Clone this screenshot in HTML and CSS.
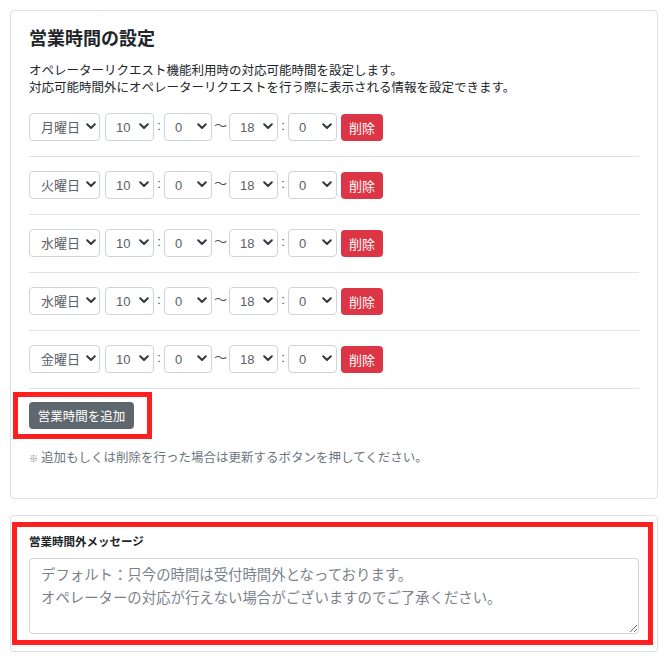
FILE: index.html
```html
<!DOCTYPE html>
<html lang="ja">
<head>
<meta charset="utf-8">
<title>営業時間の設定</title>
<link rel="stylesheet" href="styles.css">
</head>
<body>
<div class="page">
  <section class="card">
    <h2 class="title">営業時間の設定</h2>
    <p class="desc">オペレーターリクエスト機能利用時の対応可能時間を設定します。<br>対応可能時間外にオペレーターリクエストを行う際に表示される情報を設定できます。</p>

    <div class="row">
      <div class="sel sel-day"><select><option>月曜日</option></select><svg class="chev" viewBox="0 0 10 7"><path d="M1.2 1.2 5 5 8.8 1.2"/></svg></div>
      <div class="sel sel-h"><select><option>10</option></select><svg class="chev" viewBox="0 0 10 7"><path d="M1.2 1.2 5 5 8.8 1.2"/></svg></div>
      <span class="colon">:</span>
      <div class="sel sel-m"><select><option>0</option></select><svg class="chev" viewBox="0 0 10 7"><path d="M1.2 1.2 5 5 8.8 1.2"/></svg></div>
      <span class="tilde">〜</span>
      <div class="sel sel-h"><select><option>18</option></select><svg class="chev" viewBox="0 0 10 7"><path d="M1.2 1.2 5 5 8.8 1.2"/></svg></div>
      <span class="colon">:</span>
      <div class="sel sel-m2"><select><option>0</option></select><svg class="chev" viewBox="0 0 10 7"><path d="M1.2 1.2 5 5 8.8 1.2"/></svg></div>
      <button class="btn-del">削除</button>
    </div>
    <hr class="sep">
    <div class="row">
      <div class="sel sel-day"><select><option>火曜日</option></select><svg class="chev" viewBox="0 0 10 7"><path d="M1.2 1.2 5 5 8.8 1.2"/></svg></div>
      <div class="sel sel-h"><select><option>10</option></select><svg class="chev" viewBox="0 0 10 7"><path d="M1.2 1.2 5 5 8.8 1.2"/></svg></div>
      <span class="colon">:</span>
      <div class="sel sel-m"><select><option>0</option></select><svg class="chev" viewBox="0 0 10 7"><path d="M1.2 1.2 5 5 8.8 1.2"/></svg></div>
      <span class="tilde">〜</span>
      <div class="sel sel-h"><select><option>18</option></select><svg class="chev" viewBox="0 0 10 7"><path d="M1.2 1.2 5 5 8.8 1.2"/></svg></div>
      <span class="colon">:</span>
      <div class="sel sel-m2"><select><option>0</option></select><svg class="chev" viewBox="0 0 10 7"><path d="M1.2 1.2 5 5 8.8 1.2"/></svg></div>
      <button class="btn-del">削除</button>
    </div>
    <hr class="sep">
    <div class="row">
      <div class="sel sel-day"><select><option>水曜日</option></select><svg class="chev" viewBox="0 0 10 7"><path d="M1.2 1.2 5 5 8.8 1.2"/></svg></div>
      <div class="sel sel-h"><select><option>10</option></select><svg class="chev" viewBox="0 0 10 7"><path d="M1.2 1.2 5 5 8.8 1.2"/></svg></div>
      <span class="colon">:</span>
      <div class="sel sel-m"><select><option>0</option></select><svg class="chev" viewBox="0 0 10 7"><path d="M1.2 1.2 5 5 8.8 1.2"/></svg></div>
      <span class="tilde">〜</span>
      <div class="sel sel-h"><select><option>18</option></select><svg class="chev" viewBox="0 0 10 7"><path d="M1.2 1.2 5 5 8.8 1.2"/></svg></div>
      <span class="colon">:</span>
      <div class="sel sel-m2"><select><option>0</option></select><svg class="chev" viewBox="0 0 10 7"><path d="M1.2 1.2 5 5 8.8 1.2"/></svg></div>
      <button class="btn-del">削除</button>
    </div>
    <hr class="sep">
    <div class="row">
      <div class="sel sel-day"><select><option>水曜日</option></select><svg class="chev" viewBox="0 0 10 7"><path d="M1.2 1.2 5 5 8.8 1.2"/></svg></div>
      <div class="sel sel-h"><select><option>10</option></select><svg class="chev" viewBox="0 0 10 7"><path d="M1.2 1.2 5 5 8.8 1.2"/></svg></div>
      <span class="colon">:</span>
      <div class="sel sel-m"><select><option>0</option></select><svg class="chev" viewBox="0 0 10 7"><path d="M1.2 1.2 5 5 8.8 1.2"/></svg></div>
      <span class="tilde">〜</span>
      <div class="sel sel-h"><select><option>18</option></select><svg class="chev" viewBox="0 0 10 7"><path d="M1.2 1.2 5 5 8.8 1.2"/></svg></div>
      <span class="colon">:</span>
      <div class="sel sel-m2"><select><option>0</option></select><svg class="chev" viewBox="0 0 10 7"><path d="M1.2 1.2 5 5 8.8 1.2"/></svg></div>
      <button class="btn-del">削除</button>
    </div>
    <hr class="sep">
    <div class="row">
      <div class="sel sel-day"><select><option>金曜日</option></select><svg class="chev" viewBox="0 0 10 7"><path d="M1.2 1.2 5 5 8.8 1.2"/></svg></div>
      <div class="sel sel-h"><select><option>10</option></select><svg class="chev" viewBox="0 0 10 7"><path d="M1.2 1.2 5 5 8.8 1.2"/></svg></div>
      <span class="colon">:</span>
      <div class="sel sel-m"><select><option>0</option></select><svg class="chev" viewBox="0 0 10 7"><path d="M1.2 1.2 5 5 8.8 1.2"/></svg></div>
      <span class="tilde">〜</span>
      <div class="sel sel-h"><select><option>18</option></select><svg class="chev" viewBox="0 0 10 7"><path d="M1.2 1.2 5 5 8.8 1.2"/></svg></div>
      <span class="colon">:</span>
      <div class="sel sel-m2"><select><option>0</option></select><svg class="chev" viewBox="0 0 10 7"><path d="M1.2 1.2 5 5 8.8 1.2"/></svg></div>
      <button class="btn-del">削除</button>
    </div>
    <hr class="sep sep-last">

    <button class="btn-add">営業時間を追加</button>
    <p class="note"><span class="kome">※</span>追加もしくは削除を行った場合は更新するボタンを押してください。</p>
  </section>

  <section class="card card-msg">
    <label class="label" for="msg">営業時間外メッセージ</label>
    <textarea id="msg" class="textarea" placeholder="デフォルト：只今の時間は受付時間外となっております。&#10;オペレーターの対応が行えない場合がございますのでご了承ください。"></textarea>
  </section>

  <div class="mark mark-add"></div>
  <div class="mark mark-msg"></div>
</div>
</body>
</html>
```

FILE: styles.css
```css
* { box-sizing: border-box; }

html, body {
  margin: 0;
  padding: 0;
  background: #fff;
}

body {
  font-family: "Liberation Sans", "Noto Sans CJK JP", sans-serif;
  color: #212529;
}

.page {
  position: relative;
  padding: 10px;
  width: 668px;
}

.card {
  border: 1px solid #dcdfe3;
  border-radius: 4px;
  padding: 17px 18px 18px 18px;
  background: #fff;
}

.card + .card {
  margin-top: 16px;
}

.title {
  margin: 0;
  font-size: 18px;
  line-height: 22px;
  font-weight: 700;
  color: #212529;
}

.desc {
  margin: 13px 0 16px;
  font-size: 12.5px;
  line-height: 17px;
  color: #212529;
}

.row {
  display: flex;
  align-items: center;
  height: 28px;
}

.sel {
  position: relative;
  height: 28px;
}

.sel select {
  appearance: none;
  -webkit-appearance: none;
  width: 100%;
  height: 28px;
  margin: 0;
  border: 1px solid #ced4da;
  border-radius: 4px;
  background: #fff;
  color: #596067;
  font-family: "Liberation Sans", "Noto Sans CJK JP", sans-serif;
  font-size: 13px;
  font-weight: 400;
  padding: 0 0 0 10px;
  outline: none;
}

.sel .chev {
  position: absolute;
  right: 5px;
  top: 10px;
  width: 10px;
  height: 7px;
  fill: none;
  stroke: #343a40;
  stroke-width: 2;
  stroke-linecap: round;
  stroke-linejoin: round;
  pointer-events: none;
}

.sel-day { width: 71px; margin-right: 5px; }
.sel-day select { padding-left: 11px; }
.sel-day .chev { right: 4px; }
.sel-h { width: 49px; }
.sel-m { width: 48px; }
.sel-m2 { width: 49px; margin-right: 4px; }

.colon {
  width: 10px;
  text-align: center;
  font-size: 13px;
  color: #495057;
  line-height: 1;
  margin-top: -4px;
}

.tilde {
  width: 17px;
  text-align: center;
  font-family: "Noto Sans CJK JP", sans-serif;
  font-size: 13px;
  color: #495057;
  line-height: 1;
  margin-top: -6px;
}

.btn-del {
  width: 42px;
  height: 27px;
  border: none;
  border-radius: 4px;
  background: #dc3545;
  color: #fff;
  font-family: "Noto Sans CJK JP", sans-serif;
  font-size: 13px;
  padding: 0;
}

.sep {
  border: 0;
  border-top: 1px solid #dee2e6;
  margin: 15px 0 14px;
}

.sep-last { margin-bottom: 13px; }

.btn-add {
  display: block;
  height: 27px;
  width: 105px;
  border: none;
  border-radius: 4px;
  background: #5f676e;
  color: #fff;
  font-family: "Noto Sans CJK JP", sans-serif;
  font-size: 12.5px;
  padding: 0;
}

.note {
  margin: 21px 0 12px;
  font-size: 12.5px;
  line-height: 17px;
  color: #6c757d;
}

.kome {
  font-size: 9px;
  margin-right: 3px;
}

.card-msg {
  padding: 16px 18px 17px;
}

.label {
  display: block;
  font-family: "Noto Sans CJK JP", sans-serif;
  font-size: 11.5px;
  font-weight: 700;
  line-height: 18px;
  color: #212529;
  margin-bottom: 8px;
}

.textarea {
  display: block;
  width: 100%;
  height: 76px;
  border: 1px solid #ced4da;
  border-radius: 4px;
  padding: 3px 11px;
  font-family: "Noto Sans CJK JP", sans-serif;
  font-size: 14.4px;
  line-height: 23px;
  color: #495057;
  margin: 0;
}

.textarea::placeholder {
  color: #7b828a;
}

.mark {
  position: absolute;
  border: 5px solid #ff1f1f;
  pointer-events: none;
}

.mark-add {
  left: 13px;
  top: 392px;
  width: 139px;
  height: 47px;
}

.mark-msg {
  left: 12px;
  top: 522px;
  width: 641px;
  height: 123px;
}
```
